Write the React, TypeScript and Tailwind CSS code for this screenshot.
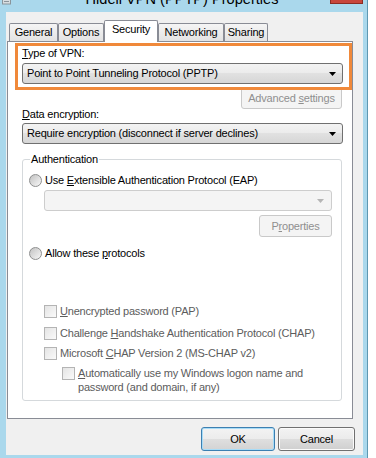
import React from "react";

const Arrow = ({ c = "#000" }: { c?: string }) => (
  <svg width="7" height="4" viewBox="0 0 7 4" className="shrink-0">
    <path d="M0 0H7L3.5 4Z" fill={c} />
  </svg>
);

const Radio = () => (
  <span className="block w-[13px] h-[13px] shrink-0 rounded-full border border-[#8e8f8f] bg-linear-to-br from-[#c2c2c2] to-[#f8f8f8]" />
);

const Check = () => (
  <span className="block w-[13px] h-[13px] shrink-0 border border-[#b4b4b4] bg-linear-to-br from-[#e4e4e4] to-[#fafafa]" />
);

const U = ({ children }: { children: React.ReactNode }) => <span className="underline underline-offset-[1px]">{children}</span>;

export default function App() {
  const tabs = [
    { name: "General", w: "w-[49px]" },
    { name: "Options", w: "w-[46px]" },
    { name: "Security", w: "w-[54px]", sel: true },
    { name: "Networking", w: "w-[66px]" },
    { name: "Sharing", w: "w-[44px]" },
  ];
  return (
    <div className="w-[376px] h-[458px] bg-white overflow-hidden font-['Liberation_Sans',Arial,sans-serif] text-[11px] leading-[13px] tracking-[-0.2px] text-black">
      <div className="w-[368px] h-[458px] bg-[#aad8ec] border-r border-[#5e98b2] flex flex-col">
        {/* title bar */}
        <div className="h-[12px] flex overflow-hidden">
          <div className="w-[12px] pl-[2px] pt-0">
            <svg width="9" height="5" viewBox="0 0 9 5">
              <rect x="0.5" y="-1" width="8" height="5" fill="#d8dde0" stroke="#8a949a" strokeWidth="1" />
              <line x1="2" y1="1.5" x2="7" y2="1.5" stroke="#8a949a" strokeWidth="1" />
            </svg>
          </div>
          <div className="flex-1 pl-[22px] -mt-[8.5px] text-center text-[14.6px] leading-[15px] tracking-normal whitespace-nowrap text-black">
            Hidell VPN (PPTP) Properties
          </div>
          <div className="w-[33px] h-[4px] mr-[4px] bg-[#c8463b] border border-t-0 border-[#8c2c23]" />
        </div>

        {/* body */}
        <div className="flex-1 ml-[6px] mr-[4px] mb-[3px] bg-[#f0f0f0] flex flex-col">
          {/* tabs */}
          <div className="h-[30px] pl-[3px] flex items-end">
            {tabs.map((t) =>
              t.sel ? (
                <div
                  key={t.name}
                  className={`relative z-10 h-[22px] ${t.w} rounded-t-[2px] border border-b-0 border-[#898c95] bg-white pt-[2px] text-center`}
                >
                  {t.name}
                </div>
              ) : (
                <div
                  key={t.name}
                  className={`h-[18px] mb-[1px] ${t.w} rounded-t-[2px] border border-b-0 border-[#898c95] bg-linear-to-b from-[#f5f5f5] to-[#e3e3e3] pt-[2px] text-center`}
                >
                  {t.name}
                </div>
              )
            )}
          </div>

          {/* panel */}
          <div className="relative -mt-[1px] ml-[1px] w-[346px] h-[378px] border border-[#898c95] bg-white pt-[5px] pl-[14px] flex flex-col items-start">
            <div className="whitespace-nowrap">
              <U>T</U>ype of VPN:
            </div>
            <div className="mt-[3px] w-[321px] h-[21px] flex items-center justify-between pl-[4px] pr-[6px] rounded-[3px] border border-[#707070] bg-[linear-gradient(#f3f3f3,#ebebeb_50%,#e1e1e1_50%,#d6d6d6)] whitespace-nowrap">
              <span>Point to Point Tunneling Protocol (PPTP)</span>
              <Arrow />
            </div>
            <div className="mt-[3px] ml-[219px] w-[101px] h-[22px] flex items-center justify-center rounded-[3px] border border-[#c9c9c9] bg-[#f4f4f4] text-[#8f8f8f] whitespace-nowrap">
              <span>
                Advanced <U>s</U>ettings
              </span>
            </div>
            <div className="-mt-[1px] whitespace-nowrap">
              <U>D</U>ata encryption:
            </div>
            <div className="mt-[2px] w-[321px] h-[21px] flex items-center justify-between pl-[4px] pr-[6px] rounded-[3px] border border-[#707070] bg-[linear-gradient(#f3f3f3,#ebebeb_50%,#e1e1e1_50%,#d6d6d6)] whitespace-nowrap">
              <span>Require encryption (disconnect if server declines)</span>
              <Arrow />
            </div>

            {/* group box */}
            <div className="relative mt-[15px] w-[320px] h-[242px] rounded-[3px] border border-[#d5d9dc] flex flex-col items-start">
              <span className="absolute left-[7px] -top-[7px] px-[1px] bg-white whitespace-nowrap">Authentication</span>

              <div className="mt-[14px] ml-[6px] flex items-center gap-[3px] whitespace-nowrap">
                <Radio />
                <span>
                  Use <U>E</U>xtensible Authentication Protocol (EAP)
                </span>
              </div>
              <div className="mt-[3px] ml-[21px] w-[288px] h-[21px] flex items-center justify-end pr-[7px] rounded-[3px] border border-[#cdcdcd] bg-[#f4f4f4]">
                <Arrow c="#b5b5b5" />
              </div>
              <div className="mt-[4px] ml-[236px] w-[73px] h-[22px] flex items-center justify-center rounded-[3px] border border-[#c9c9c9] bg-[#f4f4f4] text-[#8f8f8f] whitespace-nowrap">
                <span>
                  P<U>r</U>operties
                </span>
              </div>
              <div className="mt-[10px] ml-[6px] flex items-center gap-[3px] whitespace-nowrap">
                <Radio />
                <span>
                  Allow these <U>p</U>rotocols
                </span>
              </div>

              <div className="mt-[45px] ml-[21px] flex items-center gap-[3px] whitespace-nowrap text-[#5c5c5c]">
                <Check />
                <span>
                  <U>U</U>nencrypted password (PAP)
                </span>
              </div>
              <div className="mt-[9px] ml-[21px] flex items-center gap-[3px] whitespace-nowrap text-[#5c5c5c]">
                <Check />
                <span>
                  Challenge <U>H</U>andshake Authentication Protocol (CHAP)
                </span>
              </div>
              <div className="mt-[7px] ml-[21px] flex items-center gap-[3px] whitespace-nowrap text-[#5c5c5c]">
                <Check />
                <span>
                  Microsoft <U>C</U>HAP Version 2 (MS-CHAP v2)
                </span>
              </div>
              <div className="mt-[7px] ml-[39px] flex items-start gap-[3px] text-[#5c5c5c]">
                <Check />
                <div className="-mt-[1px] leading-[14px] whitespace-nowrap">
                  <div>
                    <U>A</U>utomatically use my Windows logon name and
                  </div>
                  <div>password (and domain, if any)</div>
                </div>
              </div>
            </div>

            {/* orange highlight */}
            <div className="absolute left-[7px] top-[1px] w-[337px] h-[47px] border-[3px] border-[#f0893a] pointer-events-none" />
          </div>

          {/* buttons */}
          <div className="mt-[8px] flex justify-end gap-[3px] pr-[8px]">
            <div className="w-[74px] h-[24px] flex items-center justify-center rounded-[3px] border border-[#3c7fb1] shadow-[inset_0_0_0_1px_#a8dcf7] bg-[linear-gradient(#f3f3f3,#ececec_50%,#dfdfdf_50%,#d3d3d3)]">
              OK
            </div>
            <div className="w-[77px] h-[24px] flex items-center justify-center rounded-[3px] border border-[#707070] shadow-[inset_0_0_0_1px_#fbfbfb] bg-[linear-gradient(#f3f3f3,#ebebeb_50%,#dddddd_50%,#cfcfcf)]">
              Cancel
            </div>
          </div>
        </div>
      </div>
    </div>
  );
}
